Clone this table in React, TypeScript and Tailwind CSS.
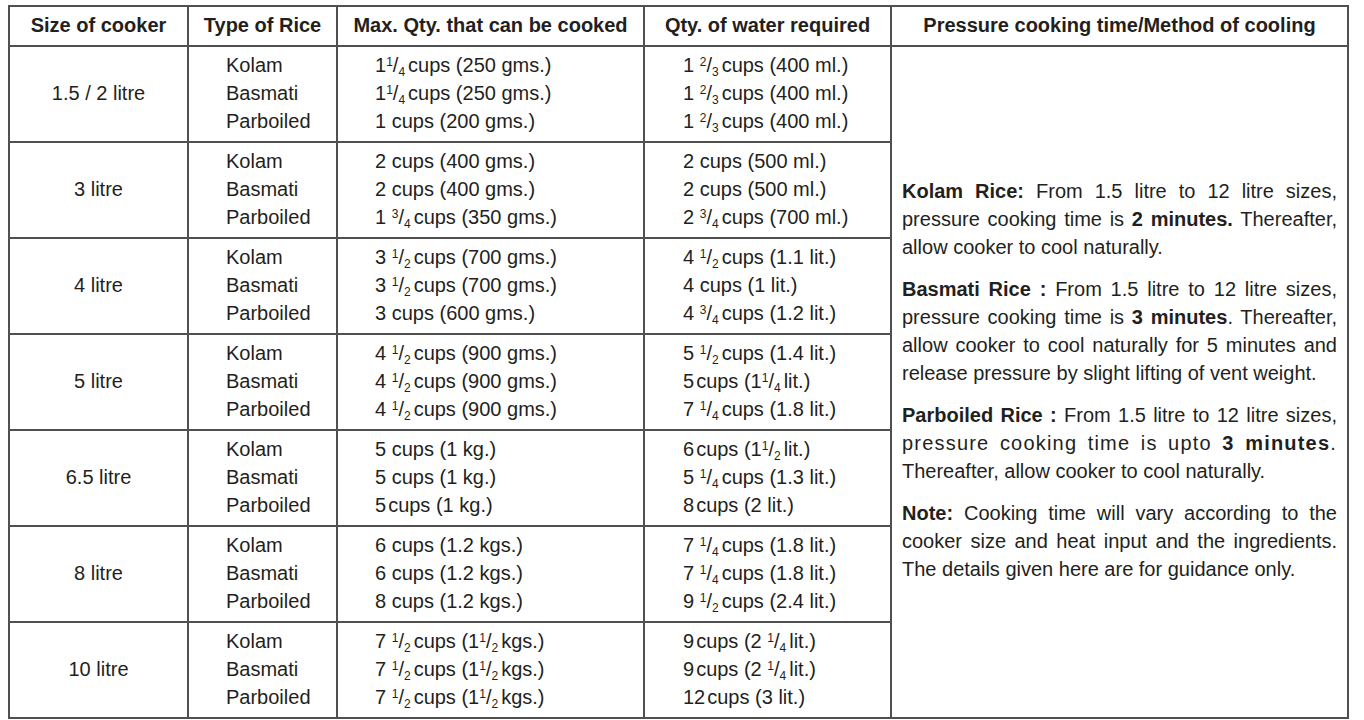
import React from "react";

const F = ({ n, d }: { n: string; d: string }) => (
  <span>
    <span className="relative -top-[6px] text-[12px] leading-none">{n}</span>/
    <span className="relative top-[4px] text-[12px] leading-none">{d}</span>
  </span>
);
const G = () => <span className="inline-block w-[3px]" />;
const T = () => <span className="inline-block w-[2px]" />;

type Group = { size: string; qty: React.ReactNode[]; water: React.ReactNode[] };

const groups: Group[] = [
  {
    size: "1.5 / 2 litre",
    qty: [
      <>1<F n="1" d="4" /><G />cups (250 gms.)</>,
      <>1<F n="1" d="4" /><G />cups (250 gms.)</>,
      <>1 cups (200 gms.)</>,
    ],
    water: [
      <>1 <F n="2" d="3" /><G />cups (400 ml.)</>,
      <>1 <F n="2" d="3" /><G />cups (400 ml.)</>,
      <>1 <F n="2" d="3" /><G />cups (400 ml.)</>,
    ],
  },
  {
    size: "3 litre",
    qty: [
      <>2 cups (400 gms.)</>,
      <>2 cups (400 gms.)</>,
      <>1 <F n="3" d="4" /><G />cups (350 gms.)</>,
    ],
    water: [
      <>2 cups (500 ml.)</>,
      <>2 cups (500 ml.)</>,
      <>2 <F n="3" d="4" /><G />cups (700 ml.)</>,
    ],
  },
  {
    size: "4 litre",
    qty: [
      <>3 <F n="1" d="2" /><G />cups (700 gms.)</>,
      <>3 <F n="1" d="2" /><G />cups (700 gms.)</>,
      <>3 cups (600 gms.)</>,
    ],
    water: [
      <>4 <F n="1" d="2" /><G />cups (1.1 lit.)</>,
      <>4 cups (1 lit.)</>,
      <>4 <F n="3" d="4" /><G />cups (1.2 lit.)</>,
    ],
  },
  {
    size: "5 litre",
    qty: [
      <>4 <F n="1" d="2" /><G />cups (900 gms.)</>,
      <>4 <F n="1" d="2" /><G />cups (900 gms.)</>,
      <>4 <F n="1" d="2" /><G />cups (900 gms.)</>,
    ],
    water: [
      <>5 <F n="1" d="2" /><G />cups (1.4 lit.)</>,
      <>5<T />cups (1<F n="1" d="4" /><G />lit.)</>,
      <>7 <F n="1" d="4" /><G />cups (1.8 lit.)</>,
    ],
  },
  {
    size: "6.5 litre",
    qty: [
      <>5 cups (1 kg.)</>,
      <>5 cups (1 kg.)</>,
      <>5<T />cups (1 kg.)</>,
    ],
    water: [
      <>6<T />cups (1<F n="1" d="2" /><G />lit.)</>,
      <>5 <F n="1" d="4" /><G />cups (1.3 lit.)</>,
      <>8<T />cups (2 lit.)</>,
    ],
  },
  {
    size: "8 litre",
    qty: [
      <>6 cups (1.2 kgs.)</>,
      <>6 cups (1.2 kgs.)</>,
      <>8 cups (1.2 kgs.)</>,
    ],
    water: [
      <>7 <F n="1" d="4" /><G />cups (1.8 lit.)</>,
      <>7 <F n="1" d="4" /><G />cups (1.8 lit.)</>,
      <>9 <F n="1" d="2" /><G />cups (2.4 lit.)</>,
    ],
  },
  {
    size: "10 litre",
    qty: [
      <>7 <F n="1" d="2" /><G />cups (1<F n="1" d="2" /><G />kgs.)</>,
      <>7 <F n="1" d="2" /><G />cups (1<F n="1" d="2" /><G />kgs.)</>,
      <>7 <F n="1" d="2" /><G />cups (1<F n="1" d="2" /><G />kgs.)</>,
    ],
    water: [
      <>9<T />cups (2 <F n="1" d="4" /><G />lit.)</>,
      <>9<T />cups (2 <F n="1" d="4" /><G />lit.)</>,
      <>12<T />cups (3 lit.)</>,
    ],
  },
];

const J = ({ children, extra = "" }: { children: React.ReactNode; extra?: string }) => (
  <div className={`whitespace-nowrap text-justify [text-align-last:justify] ${extra}`}>{children}</div>
);
const L = ({ children }: { children: React.ReactNode }) => (
  <div className="whitespace-nowrap text-left">{children}</div>
);

const head = "flex items-center justify-center bg-white pb-[2px] font-bold";

export default function App() {
  return (
    <div className="min-h-[720px] w-full bg-white pl-[8px] pt-[5px] font-['Liberation_Sans',Arial,sans-serif] text-[20px] leading-[28px] text-[#231f20]">
      <div className="grid w-max grid-cols-[177px_147px_305px_245px_455px] grid-rows-[38px_repeat(7,94px)] gap-[2px] bg-[#505050] p-[2px]">
        <div className={head}>Size of cooker</div>
        <div className={head}>Type of Rice</div>
        <div className={head}>Max. Qty. that can be cooked</div>
        <div className={head}>Qty. of water required</div>
        <div className={head}>Pressure cooking time/Method of cooling</div>

        <div className="col-start-5 row-span-7 row-start-2 flex flex-col justify-center bg-white pb-[5px] pl-[10px] pr-[10px]">
          <div>
            <J><b>Kolam Rice:</b> From 1.5 litre to 12 litre sizes,</J>
            <J>pressure cooking time is <b>2 minutes.</b> Thereafter,</J>
            <L>allow cooker to cool naturally.</L>
          </div>
          <div className="mt-[14px]">
            <J><b>Basmati Rice :</b> From 1.5 litre to 12 litre sizes,</J>
            <J>pressure cooking time is <b>3 minutes</b>. Thereafter,</J>
            <J>allow cooker to cool naturally for 5 minutes and</J>
            <L>release pressure by slight lifting of vent weight.</L>
          </div>
          <div className="mt-[14px]">
            <J><b>Parboiled Rice :</b> From 1.5 litre to 12 litre sizes,</J>
            <J extra="tracking-[1.2px]">pressure cooking time is upto <b>3 minutes</b>.</J>
            <L>Thereafter, allow cooker to cool naturally.</L>
          </div>
          <div className="mt-[14px]">
            <J><b>Note:</b> Cooking time will vary according to the</J>
            <J>cooker size and heat input and the ingredients.</J>
            <L>The details given here are for guidance only.</L>
          </div>
        </div>

        {groups.map((g, i) => (
          <React.Fragment key={i}>
            <div className="flex items-center justify-center bg-white pb-[2px]">{g.size}</div>
            <div className="flex flex-col justify-center bg-white pb-[2px] pl-[37px]">
              <div>Kolam</div>
              <div>Basmati</div>
              <div>Parboiled</div>
            </div>
            <div className="flex flex-col justify-center bg-white pb-[2px] pl-[37px]">
              {g.qty.map((q, k) => (
                <div key={k} className="whitespace-nowrap">{q}</div>
              ))}
            </div>
            <div className="flex flex-col justify-center bg-white pb-[2px] pl-[38px]">
              {g.water.map((q, k) => (
                <div key={k} className="whitespace-nowrap">{q}</div>
              ))}
            </div>
          </React.Fragment>
        ))}
      </div>
    </div>
  );
}
